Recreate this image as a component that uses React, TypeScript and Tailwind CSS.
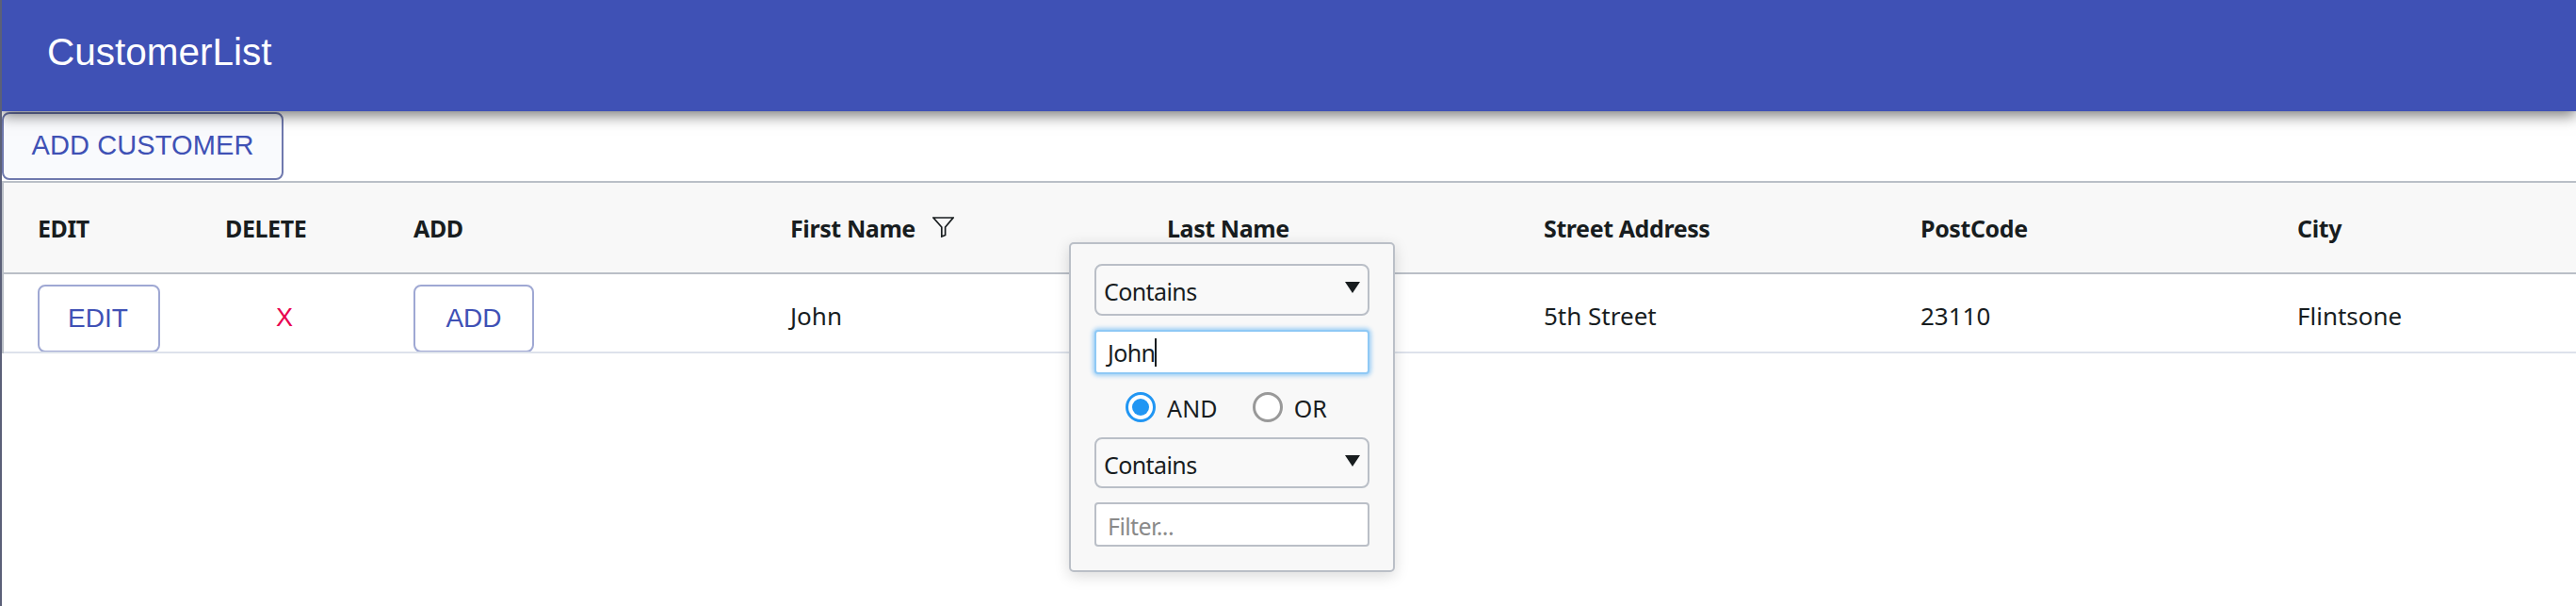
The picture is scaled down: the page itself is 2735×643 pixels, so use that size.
import React from "react";

const cols = ["EDIT", "DELETE", "ADD", "First Name", "Last Name", "Street Address", "PostCode", "City"];
const grid = "grid grid-cols-[199px_200px_400px_400px_400px_400px_400px_1fr]";
const bodyFont = "font-['Noto_Sans',sans-serif]";
const btnFont = "font-['Liberation_Sans',sans-serif]";

function Funnel() {
  return (
    <svg width="23" height="22" viewBox="0 0 23 22" className="ml-[18px] -mt-[3px]">
      <path d="M1 1H22L13.6 11V19.5L9.8 21V11Z" fill="none" stroke="#181d1f" strokeWidth="1.7" strokeLinejoin="miter" />
    </svg>
  );
}

function FakeSelect({ tall }: { tall?: boolean }) {
  return (
    <div className={`${tall ? "h-[55px]" : "h-[54px]"} rounded-[8px] border-2 border-[#babfc7] bg-[#f9f9f9] flex items-center justify-between pl-[8px] pr-[8px] text-[25px] text-[#181d1f] tracking-[-0.6px]`}>
      <span className="mt-[5px]">Contains</span>
      <svg width="16" height="12" viewBox="0 0 16 12" className="-mt-[5px]">
        <path d="M0 0H16L8 12Z" fill="#181d1f" />
      </svg>
    </div>
  );
}

function Radio({ on, label }: { on?: boolean; label: string }) {
  return (
    <div className="flex items-center gap-[12px]">
      <span className={on ? "w-[32px] h-[32px] rounded-full border-[3px] border-[#2196f3] bg-white flex items-center justify-center" : "w-[32px] h-[32px] rounded-full border-[3px] border-[#999999] bg-white"}>
        {on && <span className="block w-[18px] h-[18px] rounded-full bg-[#2196f3]" />}
      </span>
      <span className="mt-[3px] text-[25px] text-[#181d1f] tracking-[0.1px]">{label}</span>
    </div>
  );
}

export default function App() {
  return (
    <div className={`relative h-[643px] overflow-hidden bg-white border-l-2 border-[#5b6078] ${bodyFont}`}>
      <header className="relative z-10 h-[118px] bg-[#3f51b5] flex items-center pl-[48px] shadow-[0_5px_14px_rgba(0,0,0,0.5)]">
        <h1 className={`${btnFont} text-white text-[40.5px] font-normal -mt-[8px]`}>CustomerList</h1>
      </header>

      <div className="h-[74px] pt-[1px]">
        <button className={`${btnFont} w-[299px] h-[72px] rounded-[8px] border-2 border-[#6f79ae] bg-[#f9fafd] text-[#3f51b5] text-[29px] tracking-[0.1px]`}>
          ADD CUSTOMER
        </button>
      </div>

      <div className="border-l-2 border-[#babfc7]">
        <div className={`${grid} h-[99px] bg-[#f8f8f8] border-y-2 border-[#babfc7] items-center text-[25px] font-bold text-[#181d1f] tracking-[-0.4px]`}>
          {cols.map((c) => (
            <div key={c} className="pl-[36px] pt-[2px] flex items-center">
              <span>{c}</span>
              {c === "First Name" && <Funnel />}
            </div>
          ))}
        </div>
        <div className={`${grid} h-[84px] border-b-2 border-[#dde2eb] items-start overflow-hidden text-[26px] text-[#181d1f]`}>
          <div className="pl-[36px] pt-[11px]">
            <button className={`${btnFont} block w-[130px] h-[72px] rounded-[8px] border-2 border-[#9fa8d3] text-[#3f51b5] text-[28px] pr-[2px]`}>EDIT</button>
          </div>
          <div className={`${btnFont} pl-[90px] pt-[26px] text-[#e8004f] text-[27px]`}>X</div>
          <div className="pl-[36px] pt-[11px]">
            <button className={`${btnFont} block w-[128px] h-[72px] rounded-[8px] border-2 border-[#9fa8d3] text-[#3f51b5] text-[28px]`}>ADD</button>
          </div>
          <div className="pl-[36px] pt-[25px]">John</div>
          <div className="pl-[36px] pt-[25px]" />
          <div className="pl-[36px] pt-[25px]">5th Street</div>
          <div className="pl-[36px] pt-[25px]">23110</div>
          <div className="pl-[36px] pt-[25px]">Flintsone</div>
        </div>
      </div>

      <div className="absolute z-20 left-[1133px] top-[257px] w-[346px] h-[350px] rounded-[5px] border-2 border-[#babfc7] bg-[#f8f8f8] shadow-[0_4px_16px_rgba(0,0,0,0.15)] px-[25px] pt-[21px] flex flex-col">
        <FakeSelect tall />
        <div className="mt-[15px] h-[47px] rounded-[4px] border-2 border-[#8fc9f5] shadow-[0_0_4px_2px_rgba(33,150,243,0.4)] bg-white flex items-center pl-[12px] text-[25px] text-[#181d1f] tracking-[-0.6px]">
          <span className="mt-[2px]">John</span>
          <span className="block w-[2px] h-[30px] bg-[#181d1f]" />
        </div>
        <div className="mt-[19px] h-[32px] flex items-center justify-center gap-[37px] pr-[12px]">
          <Radio on label="AND" />
          <Radio label="OR" />
        </div>
        <div className="mt-[16px]"><FakeSelect /></div>
        <input
          readOnly
          placeholder="Filter..."
          className="mt-[15px] h-[47px] rounded-[4px] border-2 border-[#babfc7] bg-white pl-[12px] pt-[2px] text-[25px] tracking-[-0.6px] outline-none placeholder:text-[#8a8a8a]"
        />
      </div>
    </div>
  );
}
